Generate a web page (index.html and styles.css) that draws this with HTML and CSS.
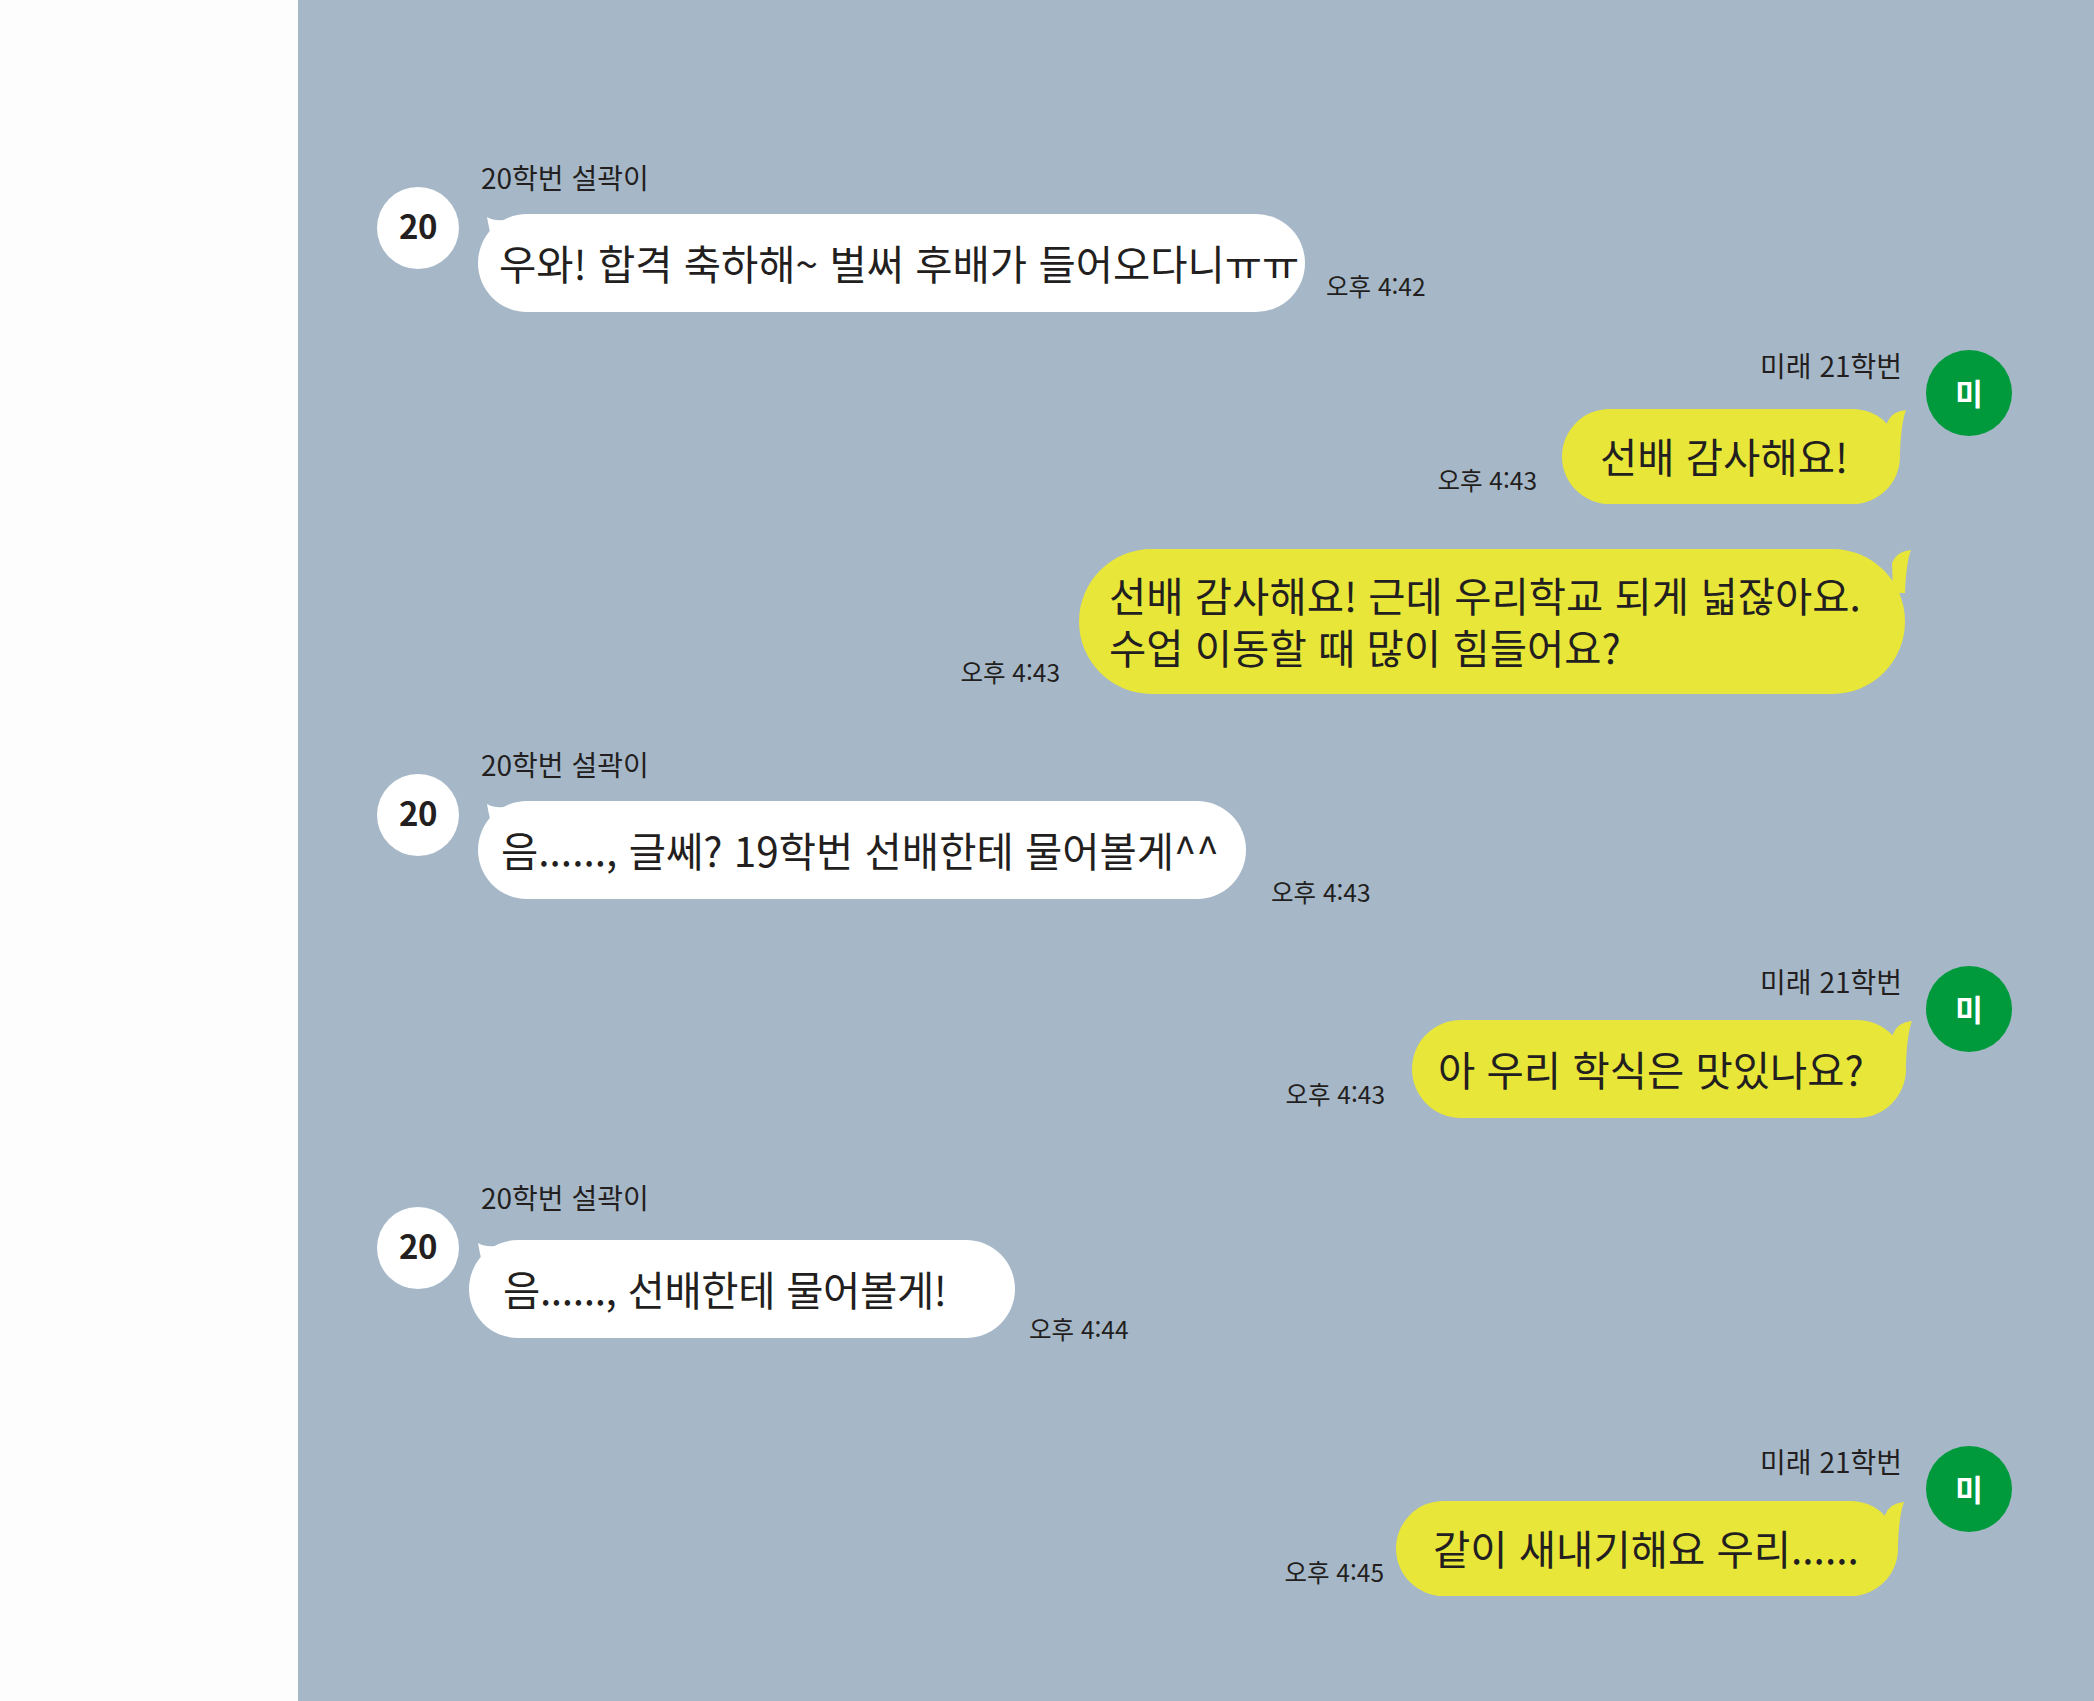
FILE: index.html
```html
<!DOCTYPE html>
<html lang="ko">
<head>
<meta charset="utf-8">
<title>채팅</title>
<link rel="stylesheet" href="styles.css">
</head>
<body>
<div class="page">
  <aside class="side"></aside>
  <main class="chat">

    <div class="msg left m1">
      <div class="avatar avatar-white">20</div>
      <div class="content">
        <div class="name">20학번 설곽이</div>
        <div class="row">
          <div class="bubble white b1">우와! 합격 축하해~ 벌써 후배가 들어오다니ㅠㅠ<svg class="tail tail-left" viewBox="0 0 30 24" width="30" height="24"><path d="M12 18 Q10 9 9 3 Q16 7 26 6 L26 20 Z"/></svg></div>
          <div class="time">오후 4:42</div>
        </div>
      </div>
    </div>

    <div class="msg right m2">
      <div class="content">
        <div class="name">미래 21학번</div>
        <div class="row">
          <div class="time">오후 4:43</div>
          <div class="bubble yellow b2">선배 감사해요!<svg class="tail tail-right" viewBox="0 0 32 46" width="32" height="46"><path d="M11 14 Q16 2 30 1 Q25 14 24 44 L12 44 Z"/></svg></div>
        </div>
      </div>
      <div class="avatar avatar-green">미</div>
    </div>

    <div class="msg right cont m3">
      <div class="content">
        <div class="row">
          <div class="time">오후 4:43</div>
          <div class="bubble yellow b3">선배 감사해요! 근데 우리학교 되게 넓잖아요.<br>수업 이동할 때 많이 힘들어요?<svg class="tail tail-right" viewBox="0 0 32 46" width="32" height="46"><path d="M11 14 Q16 2 30 1 Q25 14 24 44 L12 44 Z"/></svg></div>
        </div>
      </div>
    </div>

    <div class="msg left m4">
      <div class="avatar avatar-white">20</div>
      <div class="content">
        <div class="name">20학번 설곽이</div>
        <div class="row">
          <div class="bubble white b4">음......, 글쎄? 19학번 선배한테 물어볼게^^<svg class="tail tail-left" viewBox="0 0 30 24" width="30" height="24"><path d="M12 18 Q10 9 9 3 Q16 7 26 6 L26 20 Z"/></svg></div>
          <div class="time">오후 4:43</div>
        </div>
      </div>
    </div>

    <div class="msg right m5">
      <div class="content">
        <div class="name">미래 21학번</div>
        <div class="row">
          <div class="time">오후 4:43</div>
          <div class="bubble yellow b5">아 우리 학식은 맛있나요?<svg class="tail tail-right" viewBox="0 0 32 46" width="32" height="46"><path d="M11 14 Q16 2 30 1 Q25 14 24 44 L12 44 Z"/></svg></div>
        </div>
      </div>
      <div class="avatar avatar-green">미</div>
    </div>

    <div class="msg left m6">
      <div class="avatar avatar-white">20</div>
      <div class="content">
        <div class="name">20학번 설곽이</div>
        <div class="row">
          <div class="bubble white b6">음......, 선배한테 물어볼게!<svg class="tail tail-left" viewBox="0 0 30 24" width="30" height="24"><path d="M12 18 Q10 9 9 3 Q16 7 26 6 L26 20 Z"/></svg></div>
          <div class="time">오후 4:44</div>
        </div>
      </div>
    </div>

    <div class="msg right m7">
      <div class="content">
        <div class="name">미래 21학번</div>
        <div class="row">
          <div class="time">오후 4:45</div>
          <div class="bubble yellow b7">같이 새내기해요 우리......<svg class="tail tail-right" viewBox="0 0 32 46" width="32" height="46"><path d="M11 14 Q16 2 30 1 Q25 14 24 44 L12 44 Z"/></svg></div>
        </div>
      </div>
      <div class="avatar avatar-green">미</div>
    </div>

  </main>
</div>
</body>
</html>
```

FILE: styles.css
```css
* { box-sizing: border-box; }

html, body {
  margin: 0;
  padding: 0;
}

body {
  font-family: "Noto Sans CJK KR", "Noto Sans", sans-serif;
  color: #231f20;
  background: #fdfdfd;
}

.page {
  display: flex;
  width: 2094px;
  height: 1701px;
  overflow: hidden;
}

.side {
  flex: 0 0 298px;
  background: #fdfdfd;
}

.chat {
  flex: 1 1 auto;
  background: #a6b8c8;
  padding-top: 161px;
  display: flex;
  flex-direction: column;
}

/* ---------- message rows ---------- */
.msg {
  display: flex;
  align-items: flex-start;
}

.left {
  padding-left: 79px;
  gap: 19px;
}

.right {
  justify-content: flex-end;
  padding-right: 82px;
  gap: 24px;
}

.right.cont {
  padding-right: 192px;
}

.content {
  display: flex;
  flex-direction: column;
}

.right .content {
  align-items: flex-end;
}

.name {
  font-size: 28px;
  line-height: 32px;
  white-space: nowrap;
}

.left .name {
  padding-left: 3px;
  margin-bottom: 21px;
}

.right .name {
  margin-bottom: 23px;
}

.row {
  display: flex;
  align-items: flex-end;
}

.time {
  font-size: 24.5px;
  line-height: 28px;
  white-space: nowrap;
}

.left .time {
  margin-left: 24px;
  margin-bottom: 12px;
}

.right .time {
  margin-right: 24px;
  margin-bottom: 10px;
}

/* ---------- avatars ---------- */
.avatar {
  flex: 0 0 auto;
  border-radius: 50%;
  display: flex;
  align-items: center;
  justify-content: center;
  font-weight: 700;
}

.avatar-white {
  width: 82px;
  height: 82px;
  margin-top: 26px;
  padding-bottom: 7px;
  background: #ffffff;
  color: #231f20;
  font-size: 33px;
  letter-spacing: -0.5px;
}

.avatar-green {
  width: 86px;
  height: 86px;
  margin-top: 1px;
  padding-bottom: 2px;
  background: #009a3d;
  color: #ffffff;
  font-size: 30px;
}

/* ---------- bubbles ---------- */
.bubble {
  position: relative;
  border-radius: 999px;
  font-size: 40.5px;
  line-height: 52px;
  white-space: nowrap;
  padding-top: 23px;
  padding-bottom: 23px;
}

.bubble.white { background: #ffffff; }

.bubble.yellow {
  background: #e8e638;
  padding-top: 21px;
  padding-bottom: 22px;
}

.tail {
  position: absolute;
  top: 0;
  overflow: visible;
}

.tail-left { left: 0; }
.tail-left path { fill: #ffffff; }

.tail-right { right: -8px; }
.tail-right path { fill: #e8e638; }

/* ---------- individual messages ---------- */
.bubble.b1 { width: 827px; padding-left: 21px; }
.msg.m1 .time { margin-left: 21px; margin-bottom: 12px; }

.msg.m2 { margin-top: 37px; }
.msg.m2 .name { margin-bottom: 28px; }
.bubble.b2 { width: 338px; padding-left: 38px; margin-right: 2px; }
.msg.m2 .time { margin-right: 25px; }

.msg.m3 { margin-top: 45px; }
.bubble.b3 {
  width: 826px;
  padding-left: 30px;
  padding-top: 20px;
  padding-bottom: 21px;
  margin-right: -3px;
}
.msg.m3 .time { margin-right: 19px; margin-bottom: 8px; }

.msg.m4 { margin-top: 54px; }
.bubble.b4 { width: 768px; padding-left: 23px; }
.msg.m4 .time { margin-left: 25px; margin-bottom: -7px; }

.msg.m5 { margin-top: 66px; }
.msg.m5 .name { margin-bottom: 23px; }
.bubble.b5 {
  width: 494px;
  padding-left: 26px;
  padding-top: 23px;
  padding-bottom: 23px;
  margin-right: -4px;
}
.msg.m5 .time { margin-right: 27px; }

.msg.m6 { margin-top: 63px; }
.msg.m6 .name { margin-bottom: 27px; }
.bubble.b6 {
  width: 546px;
  padding-left: 34px;
  margin-left: -9px;
  letter-spacing: -0.35px;
}
.msg.m6 .time { margin-left: 14px; margin-bottom: -5px; }

.msg.m7 { margin-top: 107px; }
.msg.m7 .name { margin-bottom: 24px; }
.bubble.b7 { width: 502px; padding-left: 37px; margin-right: 4px; }
.msg.m7 .time { margin-right: 12px; }
```
